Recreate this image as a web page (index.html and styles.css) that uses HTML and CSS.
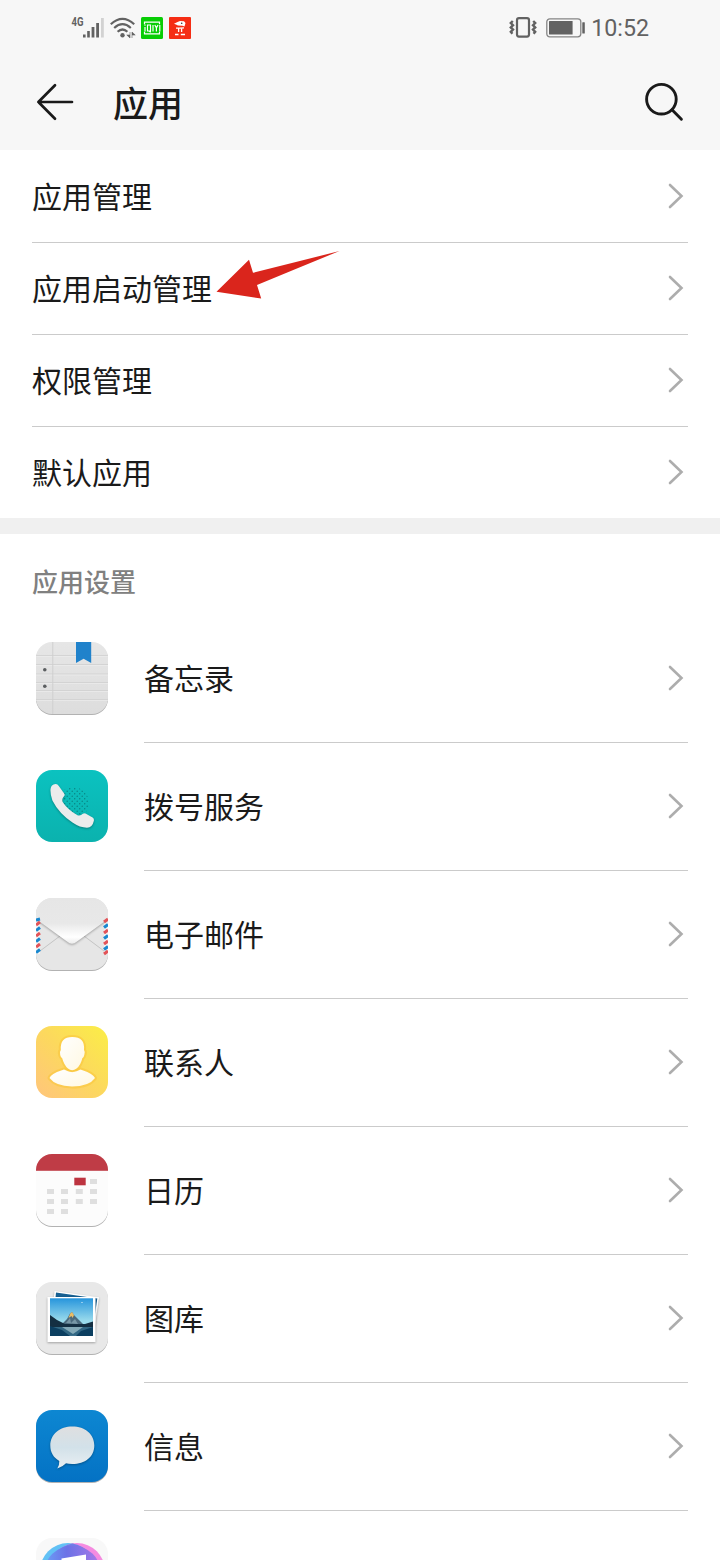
FILE: index.html
```
<!DOCTYPE html>
<html lang="zh-CN">
<head>
    <meta charset="UTF-8">
    <meta name="viewport" content="width=device-width, initial-scale=1.0">
    <title>应用</title>
    <link rel="stylesheet" href="styles.css">
</head>
<body>

    <!-- shared shapes -->
    <svg class="defs" width="0" height="0">
        <defs>
            <symbol id="chevron" viewBox="0 0 16 26">
                <path d="M2 2 L13.5 13 L2 24" fill="none" stroke="#adadad" stroke-width="2.6" stroke-linecap="round" stroke-linejoin="miter"/>
            </symbol>
            <linearGradient id="grey" x1="0" y1="0" x2="0" y2="1">
                <stop offset="0" stop-color="#e6e6e6"/>
                <stop offset="1" stop-color="#dddddd"/>
            </linearGradient>
            <linearGradient id="teal" x1="0" y1="0" x2="0" y2="1">
                <stop offset="0" stop-color="#0bc2c0"/>
                <stop offset="1" stop-color="#0bb2ae"/>
            </linearGradient>
            <linearGradient id="yellow" x1="0" y1="1" x2="1" y2="0">
                <stop offset="0" stop-color="#ffc57c"/>
                <stop offset="0.5" stop-color="#fcd85e"/>
                <stop offset="1" stop-color="#fbee46"/>
            </linearGradient>
            <linearGradient id="blue" x1="0" y1="0" x2="0" y2="1">
                <stop offset="0" stop-color="#0d87d2"/>
                <stop offset="1" stop-color="#0472c4"/>
            </linearGradient>
            <linearGradient id="flap" x1="0" y1="0" x2="0" y2="1">
                <stop offset="0" stop-color="#e6e6e6"/>
                <stop offset="0.55" stop-color="#e8e8e8"/>
                <stop offset="0.85" stop-color="#ffffff"/>
                <stop offset="1" stop-color="#ececec"/>
            </linearGradient>
            <linearGradient id="bubble" x1="0" y1="0" x2="0" y2="1">
                <stop offset="0" stop-color="#dfdfe0"/>
                <stop offset="0.5" stop-color="#d2e1e9"/>
                <stop offset="1" stop-color="#e9eff2"/>
            </linearGradient>
            <linearGradient id="person" x1="0" y1="0" x2="1" y2="1">
                <stop offset="0" stop-color="#ffffff"/>
                <stop offset="1" stop-color="#fff8e2"/>
            </linearGradient>
            <linearGradient id="sky" x1="0" y1="0" x2="0" y2="1">
                <stop offset="0" stop-color="#2795dc"/>
                <stop offset="0.6" stop-color="#9adbec"/>
            </linearGradient>
            <linearGradient id="music" x1="0" y1="0" x2="1" y2="0">
                <stop offset="0" stop-color="#6aa0f7"/>
                <stop offset="0.4" stop-color="#6c72e6"/>
                <stop offset="1" stop-color="#a979e8"/>
            </linearGradient>
            <pattern id="dots" width="5" height="5" patternUnits="userSpaceOnUse">
                <circle cx="1.2" cy="1.2" r="0.75" fill="#078482"/>
                <circle cx="3.7" cy="3.7" r="0.75" fill="#078482"/>
            </pattern>
            <clipPath id="tile"><rect width="72" height="72" rx="16"/></clipPath>
        </defs>
    </svg>

    <div class="screen">
        <div class="status-bar">
            <div class="status-left">
                <svg width="34" height="26" viewBox="0 0 34 26">
                    <text class="net" x="0.5" y="10.5" textLength="12" lengthAdjust="spacingAndGlyphs">4G</text>
                    <g fill="#626262">
                        <rect x="12" y="19.5" width="2.6" height="3"/>
                        <rect x="16.2" y="16" width="2.6" height="6.5"/>
                        <rect x="20.6" y="12" width="2.8" height="10.5"/>
                        <rect x="25.2" y="8" width="2.8" height="14.5"/>
                        <rect x="30" y="3" width="2.8" height="19.5" fill="#d2d2d2"/>
                    </g>
                </svg>
                <svg class="wifi" width="26" height="22" viewBox="0 0 26 22">
                    <g fill="none" stroke="#626262" stroke-width="2.2">
                        <path d="M0.8 7.2 Q12.5 -3.6 24.2 7.2"/>
                        <path d="M4.2 11 Q12.5 3.4 20.8 11"/>
                        <path d="M7.6 14.8 Q12.5 10.2 17.4 14.8"/>
                    </g>
                    <circle cx="12.5" cy="18.3" r="2.2" fill="#626262"/>
                    <path d="M20 15 V21 L16.8 18 H20 M22 21 V15 L25.2 18 H22" fill="#626262" stroke="#626262" stroke-width="0.6"/>
                </svg>
                <svg class="badge" width="22" height="22" viewBox="0 0 22 22">
                    <rect width="22" height="22" rx="1.5" fill="#08cd05"/>
                    <g fill="none" stroke="#fff" stroke-width="1.2">
                        <path d="M3.5 7.2 V5.2 H18.5 V7.2 M3.5 14.8 V16.8 H18.5 V14.8"/>
                        <path d="M4 10 V14.5 M4 7.5 V8.7 M6.5 8 H9.5 V14 H6.5 Z M8 14 L9.8 15.2 M12 8 V14.5 M13.8 8 L15.4 10.8 L17 8 M15.4 10.8 V14.5 M18.8 8 V14.5"/>
                    </g>
                </svg>
                <svg class="badge" width="22" height="22" viewBox="0 0 22 22">
                    <rect width="22" height="22" rx="1" fill="#f52d14"/>
                    <path d="M5 6.8 L8.5 5 L11 4 L15 4.2 L16.5 6 L15.5 9.5 L13.5 8.8 L9 8.5 L7.5 7.8 Z" fill="#fff"/>
                    <circle cx="12.7" cy="6.2" r="0.8" fill="#333"/>
                    <path d="M7 11.2 H11 L15 10.8 M9.6 11.5 V15 M12.6 11.5 V15 M6 17.5 H9.5 M11.8 17.5 H16" fill="none" stroke="#fff" stroke-width="1.3"/>
                </svg>
            </div>
            <div class="status-right">
                <svg width="28" height="22" viewBox="0 0 28 22">
                    <rect x="8" y="1.2" width="12" height="18.4" rx="2" fill="none" stroke="#626262" stroke-width="2.2"/>
                    <path d="M3.8 4 L1.8 6 L4 8.2 L1.8 10.4 L4 12.6 L1.8 14.8 L3.4 16.8 M24.2 4 L26.2 6 L24 8.2 L26.2 10.4 L24 12.6 L26.2 14.8 L24.6 16.8" fill="none" stroke="#626262" stroke-width="2.4"/>
                </svg>
                <svg class="battery" width="40" height="20" viewBox="0 0 40 20">
                    <rect x="0.8" y="0.8" width="34" height="18" rx="3" fill="none" stroke="#858585" stroke-width="1.3"/>
                    <rect x="3" y="3" width="23.6" height="13.6" rx="0.5" fill="#626262"/>
                    <rect x="36.3" y="4.3" width="2.5" height="11.2" rx="0.5" fill="#626262"/>
                </svg>
                <span class="time">10:52</span>
            </div>
        </div>

        <div class="header">
            <svg class="back" width="38" height="38" viewBox="0 0 38 38">
                <path d="M19 2.3 L2.4 19 L19 35.7 M2.4 19 H36" fill="none" stroke="#1a1a1a" stroke-width="2.7" stroke-linecap="round" stroke-linejoin="round"/>
            </svg>
            <h1>应用</h1>
            <svg class="search" width="40" height="40" viewBox="0 0 40 40">
                <circle cx="17.4" cy="17.2" r="14.8" fill="none" stroke="#1a1a1a" stroke-width="2.9"/>
                <path d="M28 27.8 L37.4 37.2" stroke="#1a1a1a" stroke-width="2.9" stroke-linecap="round"/>
            </svg>
        </div>

        <div class="menu">
            <div class="menu-item"><span>应用管理</span><svg class="chevron"><use href="#chevron"/></svg></div>
            <div class="menu-item">
                <span>应用启动管理</span>
                <svg class="pointer" width="126" height="50" viewBox="0 0 126 50">
                    <path d="M0.5 41.8 L33 9.7 L37 22.8 Q80 12 123.5 1 Q82 18 41 35 L45.2 48.6 Z" fill="#da251c"/>
                </svg>
                <svg class="chevron"><use href="#chevron"/></svg>
            </div>
            <div class="menu-item"><span>权限管理</span><svg class="chevron"><use href="#chevron"/></svg></div>
            <div class="menu-item"><span>默认应用</span><svg class="chevron"><use href="#chevron"/></svg></div>
        </div>

        <div class="apps">
            <h2>应用设置</h2>

            <div class="app">
                <svg class="icon shadow" viewBox="0 0 72 72">
                    <g clip-path="url(#tile)">
                        <rect width="72" height="72" fill="url(#grey)"/>
                        <path d="M0 13.5 H72 M0 22.5 H72 M0 32 H72 M0 40.5 H72 M0 48.5 H72 M0 57.5 H72" stroke="#cfcfcf" stroke-width="0.8"/>
                        <path d="M0 14.5 H72 M0 23.5 H72 M0 33 H72 M0 41.5 H72 M0 49.5 H72 M0 58.5 H72" stroke="#ececec" stroke-width="0.7"/>
                        <path d="M16.8 0 V72" stroke="#cfcfcf"/>
                        <path d="M40 0 H55.2 V21 L47.6 16.8 L40 21 Z" fill="#2082cb"/>
                    </g>
                    <circle cx="8.8" cy="27.7" r="1.8" fill="#5b5e60"/>
                    <circle cx="8.8" cy="44.2" r="1.8" fill="#5b5e60"/>
                </svg>
                <div class="app-row"><span>备忘录</span><svg class="chevron"><use href="#chevron"/></svg></div>
            </div>

            <div class="app">
                <svg class="icon" viewBox="0 0 72 72">
                    <rect width="72" height="72" rx="16" fill="url(#teal)"/>
                    <circle cx="37" cy="33" r="16" fill="url(#dots)"/>
                    <path class="lift" d="M14.5 19.2 Q15 14.5 19.5 14 Q21.5 13.8 22.8 16 L28.5 24 Q29 25.3 27.8 26.5 Q25.2 29.3 27 32.5 Q32 40 41.5 45.2 Q44.5 46.2 46.8 43.8 Q48 42.8 49.5 43.4 L57 47.8 Q58.3 49 57.8 51 Q56.4 57.6 51 57.7 Q44 57.7 36.5 52.5 Q23 43.5 16.4 30.5 Q14.2 24.5 14.5 19.2 Z" fill="#ececec"/>
                </svg>
                <div class="app-row"><span>拨号服务</span><svg class="chevron"><use href="#chevron"/></svg></div>
            </div>

            <div class="app">
                <svg class="icon shadow" viewBox="0 0 72 72">
                    <g clip-path="url(#tile)">
                        <rect width="72" height="72" fill="#e6e6e6"/>
                        <path d="M4 53 L24 38 M68 53 L48 38" stroke="#c4c4c4"/>
                        <rect y="21" width="4" height="35" fill="#f3f3f3"/>
                        <rect x="68" y="21" width="4" height="35" fill="#f3f3f3"/>
                        <path class="lift" d="M0 0 H72 V21 L41 43.5 Q36 48 31 43.5 L0 21 Z" fill="url(#flap)"/>
                        <path d="M0 27 L4 24 M0 38 L4 35 M0 49 L4 46 M68 24 L72 21 M68 35 L72 32 M68 46 L72 43 M68 56 L72 53" stroke="#e25358" stroke-width="3"/>
                        <path d="M0 22 L4 21 M0 32.5 L4 29.5 M0 43.5 L4 40.5 M0 54.5 L4 51.5 M68 29.5 L72 26.5 M68 40.5 L72 37.5 M68 51.5 L72 48.5" stroke="#1988cf" stroke-width="3"/>
                    </g>
                </svg>
                <div class="app-row"><span>电子邮件</span><svg class="chevron"><use href="#chevron"/></svg></div>
            </div>

            <div class="app">
                <svg class="icon" viewBox="0 0 72 72">
                    <rect width="72" height="72" rx="16" fill="url(#yellow)"/>
                    <g fill="url(#person)" stroke="#fac73e" stroke-opacity="0.6" stroke-width="4" paint-order="stroke" stroke-linejoin="round">
                        <path d="M13.5 52 Q15 47.5 28 43.4 Q32 45.5 36 46 Q41 45.5 44.5 43.4 Q57 47.5 59 52 Q53 60.5 36 60.5 Q19.5 60 13.5 52 Z"/>
                        <path d="M24.8 24 Q23.8 11 36.3 11 Q49.2 11 48 24 Q49.5 26 48.3 29 Q47.8 31.5 46.3 32.2 Q44.8 39 40.5 42.5 Q36 45.8 32 42.5 Q28 39 26.2 32.2 Q24.7 31.5 24.2 29 Q23.3 26 24.8 24 Z"/>
                    </g>
                </svg>
                <div class="app-row"><span>联系人</span><svg class="chevron"><use href="#chevron"/></svg></div>
            </div>

            <div class="app">
                <svg class="icon shadow" viewBox="0 0 72 72">
                    <g clip-path="url(#tile)">
                        <rect width="72" height="72" fill="#fcfcfc"/>
                        <rect width="72" height="16.8" fill="#bf3c46"/>
                    </g>
                    <rect x="38.3" y="23.7" width="11.4" height="7.6" fill="#bd3440"/>
                    <g fill="#dfdfdf">
                        <rect x="54" y="25" width="7" height="5"/>
                        <rect x="11" y="35" width="7" height="5"/><rect x="25" y="35" width="7" height="5"/><rect x="39.8" y="35" width="7" height="5"/><rect x="54" y="35" width="7" height="5"/>
                        <rect x="11" y="45" width="7" height="5"/><rect x="25" y="45" width="7" height="5"/><rect x="39.8" y="45" width="7" height="5"/><rect x="54" y="45" width="7" height="5"/>
                        <rect x="11" y="55" width="7" height="5"/><rect x="25" y="55" width="7" height="5"/>
                    </g>
                </svg>
                <div class="app-row"><span>日历</span><svg class="chevron"><use href="#chevron"/></svg></div>
            </div>

            <div class="app">
                <svg class="icon shadow" viewBox="0 0 72 72">
                    <rect width="72" height="72" rx="16" fill="#e8e8e8"/>
                    <path class="lift" d="M18.5 9 L63 15.2 L57.5 54 L15 48 Z" fill="#fff"/>
                    <path d="M20 10.6 L61.3 16.4 L58 39 L18 32 Z" fill="#165f91"/>
                    <rect class="lift" x="11.5" y="15" width="48" height="45" fill="#fff"/>
                    <rect x="14" y="16.3" width="43" height="37.6" fill="url(#sky)"/>
                    <path d="M26 42 L31 37 L34 31.5 L36 30 L38 33 L43 38 L47 42 Z" fill="#4b6a7d"/>
                    <path d="M34.2 31.5 L36 30 L38 33 L36.5 36 L35.5 34 L32.5 36 Z" fill="#e9bd66"/>
                    <path d="M30 41 L34 36 L35 41 L39 37 L42 42 Z" fill="#7897a6"/>
                    <path d="M14 33 L21 38 L29 42 H49 L57 39.5 V46 H14 Z" fill="#142f42"/>
                    <rect x="14" y="45" width="43" height="8.9" fill="#326783"/>
                    <path d="M26 45 H47 L37 52 Z" fill="#83a9b7"/>
                    <path d="M14 44 L26 48 L34 54 H14 Z M45 49 L57 45 V54 H40 Z" fill="#0c3f60"/>
                    <circle cx="46" cy="20.5" r="0.6" fill="#fff"/>
                </svg>
                <div class="app-row"><span>图库</span><svg class="chevron"><use href="#chevron"/></svg></div>
            </div>

            <div class="app">
                <svg class="icon shadow" viewBox="0 0 72 72">
                    <rect width="72" height="72" rx="16" fill="url(#blue)"/>
                    <path class="lift" d="M36.3 16.5 C49 16.5 58.3 24 58.3 35.5 C58.3 47 49 54 36.3 54 Q32.5 54 30 53.2 Q26.5 57 21.3 58.4 Q23.5 55.5 23.3 51 C17.5 47.5 14.3 42.5 14.3 35.5 C14.3 24 24 16.5 36.3 16.5 Z" fill="url(#bubble)"/>
                </svg>
                <div class="app-row"><span>信息</span><svg class="chevron"><use href="#chevron"/></svg></div>
            </div>

            <div class="app">
                <svg class="icon" viewBox="0 0 72 72">
                    <rect width="72" height="72" rx="16" fill="#f8f8f8"/>
                    <circle cx="32" cy="33" r="28" fill="#62c1f5"/>
                    <circle cx="41" cy="33" r="28" fill="#f48be0"/>
                    <path d="M36.5 5.4 A28 28 0 0 0 13 33 H60 A28 28 0 0 0 36.5 5.4" fill="#6f7fe8"/>
                    <circle cx="36.5" cy="36" r="28.5" fill="url(#music)"/>
                    <path d="M25.5 20.5 L50 16.5 V46 H46 V27 L30 29 V50 H25.5 Z" fill="#fff"/>
                </svg>
                <div class="app-row"></div>
            </div>
        </div>
    </div>

</body>
</html>
```
FILE: styles.css
```
body {
    font-family: "Noto Sans CJK SC", sans-serif;
    margin: 0;
    background-color: #fff;
    color: #1a1a1a;
}
svg {
    display: block;
    flex-shrink: 0;
}
.defs {
    position: absolute;
}
.screen {
    height: 1560px;
    overflow: hidden;
}
.status-bar {
    display: flex;
    justify-content: space-between;
    height: 56px;
    padding: 0 71px;
    background-color: #f7f7f7;
}
.status-left, .status-right {
    display: flex;
    align-items: center;
}
.net {
    font-family: Roboto, sans-serif;
    font-size: 12px;
    font-weight: bold;
    fill: #626262;
}
.wifi {
    margin-left: 5px;
}
.badge {
    margin-left: 5px;
}
.badge + .badge {
    margin-left: 6px;
}
.battery {
    margin: 0 5px 0 9px;
}
.time {
    font-family: Roboto, sans-serif;
    font-size: 23.2px;
    line-height: 56px;
    color: #626262;
}
.header {
    display: flex;
    align-items: center;
    box-sizing: border-box;
    height: 94px;
    padding: 0 36px 2px;
    background-color: #f7f7f7;
}
.header h1 {
    flex: 1;
    margin: 0 0 0 39px;
    font-size: 35px;
    font-weight: 500;
    line-height: 92px;
}
.menu {
    border-bottom: 16px solid #f0f0f0;
}
.menu-item {
    position: relative;
    display: flex;
    align-items: center;
    justify-content: space-between;
    box-sizing: border-box;
    height: 92px;
    margin: 0 32px;
    padding: 0 4px 2px 0;
    border-top: 1px solid #cbcbcb;
    font-size: 30px;
}
.menu-item:first-child {
    border-top-color: transparent;
}
.menu-item span, .app-row span {
    padding-bottom: 2px;
}
.pointer {
    position: absolute;
    left: 184px;
    top: 7px;
}
.chevron {
    width: 16px;
    height: 26px;
}
.apps h2 {
    margin: 0;
    padding-left: 32px;
    height: 80px;
    line-height: 93px;
    font-size: 26px;
    font-weight: 500;
    color: #808080;
}
.app {
    display: flex;
    align-items: center;
    height: 128px;
    padding: 0 32px 0 36px;
}
.icon {
    width: 72px;
    height: 72px;
    overflow: visible;
}
.shadow {
    filter: drop-shadow(0 1px 0.6px rgba(0, 0, 0, 0.3));
}
.lift {
    filter: drop-shadow(0 1px 1px rgba(0, 0, 0, 0.3));
}
.app-row {
    flex: 1;
    display: flex;
    align-items: center;
    justify-content: space-between;
    box-sizing: border-box;
    height: 129px;
    margin-left: 36px;
    padding-right: 4px;
    border-bottom: 1px solid #cbcbcb;
    font-size: 30px;
}
```
